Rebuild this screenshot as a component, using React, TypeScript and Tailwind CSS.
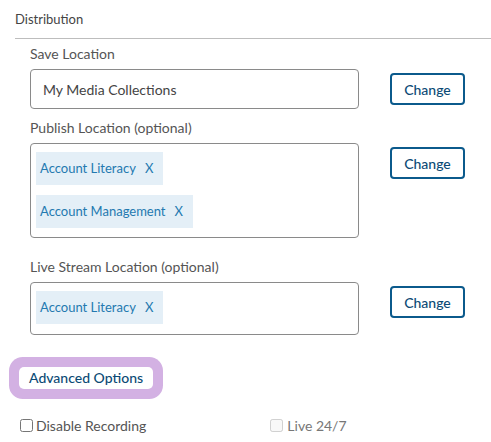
import React from "react"

const font = { fontFamily: "Lato, 'Open Sans', sans-serif" }

function Tag({ label }: { label: string }) {
  return (
    <span className="inline-flex items-center h-[33px] pl-[4px] pr-[10px] bg-[#e4eff7] text-[#2379b0] text-[13px]">
      {label}
      <span className="ml-[9px]">X</span>
    </span>
  )
}

function ChangeButton() {
  return (
    <button className="ml-[31px] mt-[4px] w-[75px] h-[32px] border-2 border-[#0b5a8c] rounded-[4px] text-[14px] font-medium text-[#0b4a75] bg-white">
      Change
    </button>
  )
}

export default function App() {
  return (
    <div className="w-[491px] h-[442px] bg-white text-[#555] overflow-hidden" style={font}>
      <div className="pl-[15px]">
        <div className="h-[39px] pt-[10px] text-[13px] text-[#444] border-b border-[#bdbdbd]">Distribution</div>

        <div className="pl-[15px]">
          <div className="mt-[5px] h-[20px] text-[14px] leading-[20px]">Save Location</div>
          <div className="mt-[5px] flex items-start">
            <div className="w-[329px] h-[40px] border border-[#8a8a8a] rounded-[4px] flex items-center pl-[12px] text-[14px] text-[#444]">
              My Media Collections
            </div>
            <ChangeButton />
          </div>

          <div className="mt-[9px] h-[20px] text-[14px] leading-[20px]">Publish Location (optional)</div>
          <div className="mt-[5px] flex items-start">
            <div className="w-[329px] h-[95px] border border-[#8a8a8a] rounded-[4px] px-[5px] pt-[8px] flex flex-col items-start gap-[10px]">
              <Tag label="Account Literacy" />
              <Tag label="Account Management" />
            </div>
            <ChangeButton />
          </div>

          <div className="mt-[19px] h-[20px] text-[14px] leading-[20px]">Live Stream Location (optional)</div>
          <div className="mt-[5px] flex items-start">
            <div className="w-[329px] h-[53px] border border-[#8a8a8a] rounded-[4px] px-[5px] pt-[8px] flex flex-col items-start">
              <Tag label="Account Literacy" />
            </div>
            <ChangeButton />
          </div>
        </div>
      </div>

      <div className="mt-[30px] ml-[19px]">
        <button className="h-[22px] px-[10px] bg-white rounded-[5px] text-[14px] font-medium text-[#0b4a75] shadow-[0_0_0_10px_#d3b1e3]">
          Advanced Options
        </button>
      </div>

      <div className="mt-[27px] flex items-center h-[18px] text-[14px] text-[#555]">
        <label className="ml-[20px] flex items-center">
          <input type="checkbox" className="w-[13px] h-[13px] m-0" />
          <span className="ml-[3px]">Disable Recording</span>
        </label>
        <label className="ml-[124px] flex items-center text-[#777]">
          <input type="checkbox" disabled className="w-[13px] h-[13px] m-0" />
          <span className="ml-[4px]">Live 24/7</span>
        </label>
      </div>
    </div>
  )
}
